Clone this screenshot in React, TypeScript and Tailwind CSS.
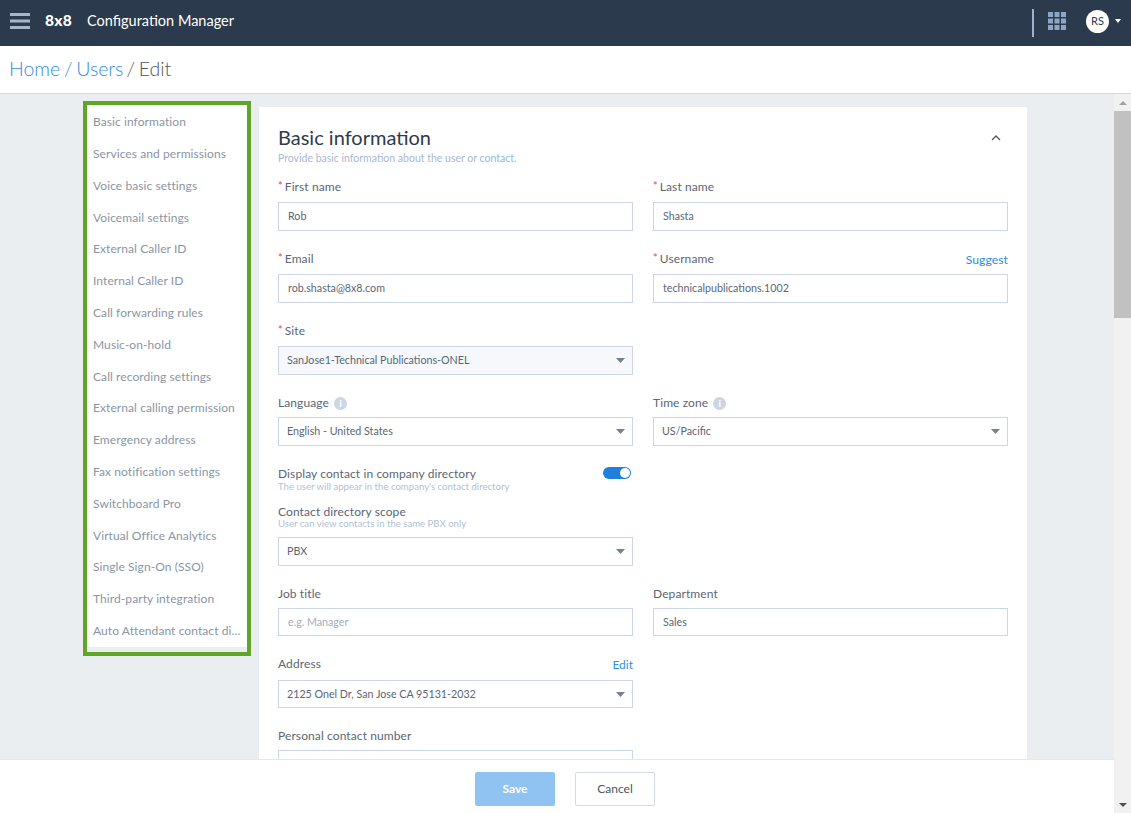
const sideItems = [
  'Basic information',
  'Services and permissions',
  'Voice basic settings',
  'Voicemail settings',
  'External Caller ID',
  'Internal Caller ID',
  'Call forwarding rules',
  'Music-on-hold',
  'Call recording settings',
  'External calling permission',
  'Emergency address',
  'Fax notification settings',
  'Switchboard Pro',
  'Virtual Office Analytics',
  'Single Sign-On (SSO)',
  'Third-party integration',
  'Auto Attendant contact directory',
];

function Caret() {
  return (
    <svg width="9" height="5" viewBox="0 0 9 5" className="shrink-0">
      <path d="M0 0h9L4.5 5z" fill="#76808f" />
    </svg>
  );
}

function InfoDot() {
  return (
    <span className="w-[13px] h-[13px] ml-[5px] rounded-full bg-[#ccd6e4] text-white text-[10px] leading-[13px] font-bold text-center inline-block">
      i
    </span>
  );
}

function Label({ text, required, info }: { text: string; required?: boolean; info?: boolean }) {
  return (
    <div className="flex items-center h-[16px] text-[12px] leading-[16px] text-[#5b6675] tracking-[0.1px]">
      {required && <span className="text-[#e8484d] mr-[2px] text-[11px] -mt-[3px]">*</span>}
      {text}
      {info && <InfoDot />}
    </div>
  );
}

function TextBox({ value, placeholder, short }: { value?: string; placeholder?: boolean; short?: boolean }) {
  return (
    <div
      className={`border border-[#cdd6e6] px-[9px] flex items-center text-[10.7px] ${short ? 'h-[28px]' : 'h-[29px]'} ${
        placeholder ? 'text-[#a3adbb]' : 'text-[#5b6675]'
      }`}
    >
      {value}
    </div>
  );
}

function SelectBox({ value, disabled, short }: { value: string; disabled?: boolean; short?: boolean }) {
  return (
    <div
      className={`border border-[#cdd6e6] pl-[8px] pr-[7px] flex items-center justify-between text-[10.7px] text-[#5b6675] ${
        short ? 'h-[28px]' : 'h-[29px]'
      } ${disabled ? 'bg-[#f6f8fb]' : 'bg-white'}`}
    >
      {value}
      <Caret />
    </div>
  );
}

export default function App() {
  return (
    <div className="h-[813px] w-[1131px] overflow-hidden flex flex-col bg-white [font-family:Lato,sans-serif]">
      <header className="h-[46px] shrink-0 bg-[#2b3a4c] flex items-center text-white">
        <svg width="20" height="16" viewBox="0 0 20 16" className="ml-[10px] -mt-[5px]">
          <rect y="0" width="20" height="3" fill="#a9b6c9" />
          <rect y="6.5" width="20" height="3" fill="#a9b6c9" />
          <rect y="13" width="20" height="3" fill="#a9b6c9" />
        </svg>
        <span className="ml-[15px] w-[28px] text-[15.5px] font-black tracking-[0.2px] -mt-[5px]">8x8</span>
        <span className="ml-[14px] text-[14.5px] -mt-[5px]">Configuration Manager</span>
        <div className="ml-auto w-[2px] h-[28px] bg-[#9fb2ca]" />
        <svg width="18" height="18" viewBox="0 0 18 18" className="ml-[14px] -mt-[5px]">
          {[0, 6.5, 13].map((y) =>
            [0, 6.5, 13].map((x) => <rect key={`${x}-${y}`} x={x} y={y} width="5" height="5" fill="#8ea6c4" />)
          )}
        </svg>
        <div className="ml-[20px] w-[23px] h-[23px] rounded-full bg-white text-[#2b3a4c] text-[11px] flex items-center justify-center -mt-[4px]">
          RS
        </div>
        <svg width="6" height="4" viewBox="0 0 6 4" className="ml-[6px] mr-[10px] -mt-[4px]">
          <path d="M0 0h6L3 4z" fill="#ffffff" />
        </svg>
      </header>

      <div className="h-[48px] shrink-0 border-b border-[#d5d9e3] flex items-center pl-[9px] pb-[2px] text-[19.5px] font-light text-[#4b5563] [word-spacing:-1.5px]">
        <span className="text-[#2f8fe0]">Home / Users</span>
        <span className="ml-[3px]">/ Edit</span>
      </div>

      <div className="flex-1 min-h-0 flex">
        <div className="flex-1 min-w-0 flex flex-col">
          <main className="flex-1 min-h-0 overflow-hidden bg-[#ebeef1] flex items-start pl-[83px]">
            <nav className="mt-[7px] w-[168px] h-[555px] shrink-0 border-4 border-[#5fa526]">
              <ul className="bg-white h-[542px] pl-[6px] pr-[4px] pt-[1.4px]">
                {sideItems.map((item) => (
                  <li key={item} className="h-[31.8px] flex items-center text-[12px] tracking-[0.08px] text-[#8a95a5] min-w-0">
                    <span className="truncate">{item}</span>
                  </li>
                ))}
              </ul>
            </nav>

            <section className="ml-[8px] mt-[13px] w-[768px] bg-white px-[19px] pt-[18px] shrink-0">
              <div className="flex items-start justify-between">
                <div>
                  <h1 className="text-[20px] leading-[24px] text-[#2f3b4b]">Basic information</h1>
                  <p className="mt-[2px] text-[10.5px] leading-[14px] text-[#aab9d1]">
                    Provide basic information about the user or <span className="text-[#8fbae4]">contact.</span>
                  </p>
                </div>
                <svg width="10" height="6" viewBox="0 0 10 6" className="mt-[10px] mr-[7px]">
                  <path d="M1 5l4-4 4 4" fill="none" stroke="#4d5a6b" strokeWidth="1.4" />
                </svg>
              </div>

              <div className="mt-[14px] grid grid-cols-[355px_355px] gap-x-[20px]">
                <div>
                  <Label text="First name" required />
                  <div className="mt-[7px]"><TextBox value="Rob" /></div>
                </div>
                <div>
                  <Label text="Last name" required />
                  <div className="mt-[7px]"><TextBox value="Shasta" /></div>
                </div>

                <div className="mt-[20px]">
                  <Label text="Email" required />
                  <div className="mt-[7px]"><TextBox value="rob.shasta@8x8.com" /></div>
                </div>
                <div className="mt-[20px]">
                  <div className="flex items-center justify-between h-[16px]">
                    <Label text="Username" required />
                    <a className="text-[12.3px] leading-[16px] text-[#2f8fe0] mt-[2px]">Suggest</a>
                  </div>
                  <div className="mt-[7px]"><TextBox value="technicalpublications.1002" /></div>
                </div>

                <div className="mt-[20px]">
                  <Label text="Site" required />
                  <div className="mt-[7px]"><SelectBox value="SanJose1-Technical Publications-ONEL" disabled /></div>
                </div>
                <div />

                <div className="mt-[20px]">
                  <Label text="Language" info />
                  <div className="mt-[6px]"><SelectBox value="English - United States" /></div>
                </div>
                <div className="mt-[20px]">
                  <Label text="Time zone" info />
                  <div className="mt-[6px]"><SelectBox value="US/Pacific" /></div>
                </div>

                <div className="mt-[20px]">
                  <div className="flex items-center justify-between pr-[2px] h-[16px]">
                    <Label text="Display contact in company directory" />
                    <span className="w-[28px] h-[12px] rounded-full bg-[#1f7fdc] flex items-center justify-end pr-[1px] -mt-[3px]">
                      <span className="w-[10px] h-[10px] rounded-full bg-white" />
                    </span>
                  </div>
                  <div className="text-[9.6px] leading-[10px] text-[#b3bfd4]">
                    The user will appear in the company's contact directory
                  </div>
                  <div className="mt-[12px]"><Label text="Contact directory scope" /></div>
                  <div className="text-[9.6px] leading-[10px] text-[#b3bfd4] -mt-[1px]">
                    User can view contacts in the same PBX only
                  </div>
                  <div className="mt-[8px]"><SelectBox value="PBX" /></div>
                </div>
                <div />

                <div className="mt-[20px]">
                  <Label text="Job title" />
                  <div className="mt-[6px]"><TextBox value="e.g. Manager" placeholder short /></div>
                </div>
                <div className="mt-[20px]">
                  <Label text="Department" />
                  <div className="mt-[6px]"><TextBox value="Sales" short /></div>
                </div>

                <div className="mt-[20px]">
                  <div className="flex items-center justify-between h-[16px]">
                    <Label text="Address" />
                    <a className="text-[12px] leading-[16px] text-[#2f8fe0] mt-[1px]">Edit</a>
                  </div>
                  <div className="mt-[8px]"><SelectBox value="2125 Onel Dr, San Jose CA 95131-2032" short /></div>
                </div>
                <div />

                <div className="mt-[20px]">
                  <Label text="Personal contact number" />
                  <div className="mt-[6px]"><TextBox value="United States" /></div>
                </div>
              </div>
            </section>
          </main>

          <footer className="h-[54px] shrink-0 bg-white border-t border-[#e4e7ef] flex items-start justify-center gap-[20px] pt-[12px] pl-[16px]">
            <button className="w-[80px] h-[34px] rounded-[2px] bg-[#90c3f1] text-white text-[12px] font-bold">Save</button>
            <button className="w-[80px] h-[34px] rounded-[2px] border border-[#d5d9e3] bg-white text-[#4b5563] text-[12px]">Cancel</button>
          </footer>
        </div>

        {/* scrollbar */}
        <div className="w-[17px] shrink-0 bg-[#f1f1f1] flex flex-col items-center">
          <div className="h-[17px] shrink-0 flex items-center justify-center">
            <svg width="8" height="4" viewBox="0 0 8 4"><path d="M0 4h8L4 0z" fill="#a3a3a3" /></svg>
          </div>
          <div className="w-full h-[207px] bg-[#c1c1c1]" />
          <div className="mt-auto h-[17px] shrink-0 flex items-center justify-center">
            <svg width="8" height="4" viewBox="0 0 8 4"><path d="M0 0h8L4 4z" fill="#505050" /></svg>
          </div>
        </div>
      </div>
    </div>
  );
}
